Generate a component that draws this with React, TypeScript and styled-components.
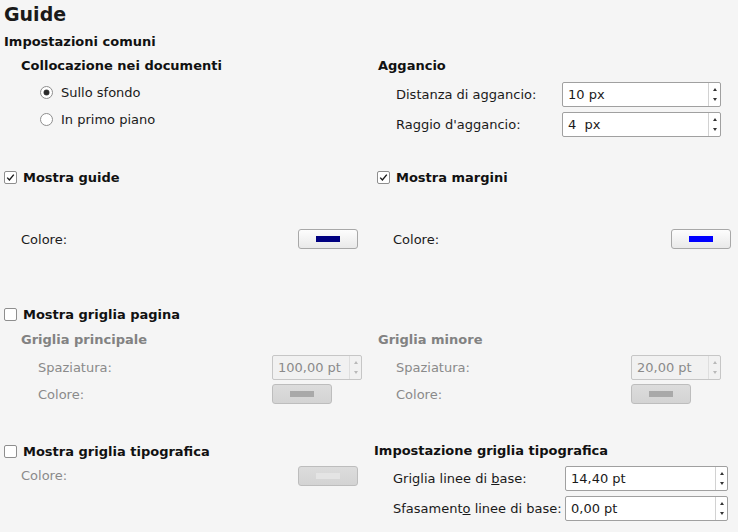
import React from 'react';
import styled, { createGlobalStyle } from 'styled-components';

const GlobalStyle = createGlobalStyle`
  html, body { margin: 0; padding: 0; background: #f5f5f5; }
  body {
    font-family: "DejaVu Sans", "Liberation Sans", sans-serif;
    font-size: 13px;
    color: #1a1a1a;
  }
`;

const Page = styled.div`
  width: 738px;
  height: 532px;
  box-sizing: border-box;
  padding-left: 4px;
  overflow: hidden;
  background: #f5f5f5;
`;

const Title = styled.h1`
  margin: 0;
  font-size: 19px;
  font-weight: bold;
  line-height: 28px;
  height: 28px;
`;

const Heading = styled.div<{ $indent?: number; $top?: number; $bottom?: number; $disabled?: boolean }>`
  font-weight: bold;
  line-height: 20px;
  height: 20px;
  white-space: nowrap;
  padding-left: ${(p) => p.$indent ?? 0}px;
  margin-top: ${(p) => p.$top ?? 0}px;
  margin-bottom: ${(p) => p.$bottom ?? 0}px;
  color: ${(p) => (p.$disabled ? '#828282' : '#111')};
`;

const TwoCol = styled.div<{ $top: number }>`
  display: grid;
  grid-template-columns: 369px 365px;
  align-items: start;
  margin-top: ${(p) => p.$top}px;
`;

const Column = styled.div`
  display: flex;
  flex-direction: column;
`;

const FieldRow = styled.div<{ $h: number; $indent: number; $right: number; $top?: number; $disabled?: boolean }>`
  display: flex;
  align-items: center;
  height: ${(p) => p.$h}px;
  padding-left: ${(p) => p.$indent}px;
  padding-right: ${(p) => p.$right}px;
  margin-top: ${(p) => p.$top ?? 0}px;
  color: ${(p) => (p.$disabled ? '#8a8a8a' : '#1a1a1a')};
`;

const Label = styled.span`
  flex: 1;
  white-space: nowrap;
`;

const Slot = styled.div<{ $w: number }>`
  width: ${(p) => p.$w}px;
  display: flex;
  justify-content: flex-start;
`;

const SpinBox = styled.div<{ $w: number; $disabled?: boolean }>`
  display: flex;
  width: ${(p) => p.$w}px;
  height: 25px;
  box-sizing: border-box;
  border: 1px solid ${(p) => (p.$disabled ? '#c6c6c6' : '#a0a0a0')};
  border-radius: 2px;
  background: ${(p) => (p.$disabled ? '#f1f1f1' : '#ffffff')};
  color: ${(p) => (p.$disabled ? '#8a8a8a' : '#1a1a1a')};
`;

const SpinValue = styled.span`
  flex: 1;
  padding-left: 5px;
  line-height: 23px;
  white-space: pre;
`;

const SpinButtons = styled.div<{ $disabled?: boolean }>`
  width: 12px;
  border-left: 1px solid ${(p) => (p.$disabled ? '#dedede' : '#d2d2d2')};
  display: flex;
  flex-direction: column;
  align-items: center;
  justify-content: space-between;
  padding: 5px 0 5px;
  box-sizing: border-box;
`;

const Arrow = styled.span<{ $down?: boolean; $disabled?: boolean }>`
  width: 0;
  height: 0;
  border-left: 2.5px solid transparent;
  border-right: 2.5px solid transparent;
  ${(p) =>
    p.$down
      ? `border-top: 3px solid ${p.$disabled ? '#b8b8b8' : '#333'};`
      : `border-bottom: 3px solid ${p.$disabled ? '#b8b8b8' : '#333'};`}
`;

const ColorButton = styled.div<{ $disabled?: boolean }>`
  width: 60px;
  height: 20px;
  box-sizing: border-box;
  border: 1px solid ${(p) => (p.$disabled ? '#bdbdbd' : '#a8a8a8')};
  border-radius: 3px;
  background: ${(p) =>
    p.$disabled ? 'linear-gradient(#dcdcdc, #d3d3d3)' : 'linear-gradient(#fdfdfd, #e9e9e9)'};
  display: flex;
  align-items: center;
  justify-content: center;
`;

const Swatch = styled.span<{ $color: string }>`
  width: 24px;
  height: 6px;
  background: ${(p) => p.$color};
`;

const CheckRow = styled.div<{ $indent?: number; $top?: number }>`
  display: flex;
  align-items: center;
  height: 20px;
  padding-left: ${(p) => p.$indent ?? 0}px;
  margin-top: ${(p) => p.$top ?? 0}px;
  font-weight: bold;
  color: #111;
  white-space: nowrap;
`;

const CheckBox = styled.span`
  width: 13px;
  height: 13px;
  box-sizing: border-box;
  border: 1px solid #8e8e8e;
  border-radius: 2px;
  background: #fff;
  display: inline-flex;
  align-items: center;
  justify-content: center;
  margin-right: 6px;
  flex-shrink: 0;
`;

const RadioRow = styled.div<{ $indent: number }>`
  display: flex;
  align-items: center;
  height: 27px;
  padding-left: ${(p) => p.$indent}px;
  white-space: nowrap;
`;

const Radio = styled.span`
  width: 13px;
  height: 13px;
  box-sizing: border-box;
  border: 1px solid #8e8e8e;
  border-radius: 50%;
  background: #fff;
  display: inline-flex;
  align-items: center;
  justify-content: center;
  margin-right: 8px;
  flex-shrink: 0;
`;

const RadioDot = styled.span`
  width: 5px;
  height: 5px;
  border-radius: 50%;
  background: #2a2a2a;
  box-shadow: 0 0 0 0.5px #555;
`;

const Check: React.FC<{ checked?: boolean }> = ({ checked }) => (
  <CheckBox>
    {checked && (
      <svg width="11" height="11" viewBox="0 0 11 11">
        <path d="M2.2 5.6 L4.4 8 L8.8 2.6" fill="none" stroke="#1a1a1a" strokeWidth="1.4" />
      </svg>
    )}
  </CheckBox>
);

const Spin: React.FC<{ value: string; w: number; disabled?: boolean }> = ({ value, w, disabled }) => (
  <SpinBox $w={w} $disabled={disabled}>
    <SpinValue>{value}</SpinValue>
    <SpinButtons $disabled={disabled}>
      <Arrow $disabled={disabled} />
      <Arrow $down $disabled={disabled} />
    </SpinButtons>
  </SpinBox>
);

const Color: React.FC<{ color: string; disabled?: boolean }> = ({ color, disabled }) => (
  <ColorButton $disabled={disabled}>
    <Swatch $color={color} />
  </ColorButton>
);

export default function App() {
  return (
    <Page>
      <GlobalStyle />
      <Title>Guide</Title>
      <Heading $top={4}>Impostazioni comuni</Heading>

      <TwoCol $top={4}>
        <Column>
          <Heading $indent={17} $bottom={3}>Collocazione nei documenti</Heading>
          <RadioRow $indent={36}>
            <Radio><RadioDot /></Radio>
            Sullo sfondo
          </RadioRow>
          <RadioRow $indent={36}>
            <Radio />
            In primo piano
          </RadioRow>
        </Column>
        <Column>
          <Heading $indent={5} $bottom={3}>Aggancio</Heading>
          <FieldRow $h={30} $indent={23} $right={17}>
            <Label>Distanza di aggancio:</Label>
            <Spin value="10 px" w={159} />
          </FieldRow>
          <FieldRow $h={30} $indent={23} $right={17}>
            <Label>Raggio d'aggancio:</Label>
            <Spin value="4  px" w={159} />
          </FieldRow>
        </Column>
      </TwoCol>

      <TwoCol $top={28}>
        <Column>
          <CheckRow>
            <Check checked />
            Mostra guide
          </CheckRow>
          <FieldRow $h={26} $indent={17} $right={15} $top={39}>
            <Label>Colore:</Label>
            <Color color="#000080" />
          </FieldRow>
        </Column>
        <Column>
          <CheckRow $indent={4}>
            <Check checked />
            Mostra margini
          </CheckRow>
          <FieldRow $h={26} $indent={20} $right={7} $top={39}>
            <Label>Colore:</Label>
            <Color color="#0000ff" />
          </FieldRow>
        </Column>
      </TwoCol>

      <CheckRow $top={52}>
        <Check />
        Mostra griglia pagina
      </CheckRow>

      <TwoCol $top={6}>
        <Column>
          <Heading $indent={17} $bottom={2} $disabled>Griglia principale</Heading>
          <FieldRow $h={30} $indent={34} $right={11} $disabled>
            <Label>Spaziatura:</Label>
            <Spin value="100,00 pt" w={90} disabled />
          </FieldRow>
          <FieldRow $h={24} $indent={34} $right={11} $disabled>
            <Label>Colore:</Label>
            <Slot $w={90}>
              <Color color="#a9a9a9" disabled />
            </Slot>
          </FieldRow>
        </Column>
        <Column>
          <Heading $indent={5} $bottom={2} $disabled>Griglia minore</Heading>
          <FieldRow $h={30} $indent={23} $right={17} $disabled>
            <Label>Spaziatura:</Label>
            <Spin value="20,00 pt" w={90} disabled />
          </FieldRow>
          <FieldRow $h={24} $indent={23} $right={17} $disabled>
            <Label>Colore:</Label>
            <Slot $w={90}>
              <Color color="#a9a9a9" disabled />
            </Slot>
          </FieldRow>
        </Column>
      </TwoCol>

      <TwoCol $top={35}>
        <Column>
          <CheckRow>
            <Check />
            Mostra griglia tipografica
          </CheckRow>
          <FieldRow $h={25} $indent={17} $right={15} $top={2} $disabled>
            <Label>Colore:</Label>
            <Color color="#e4e4e4" disabled />
          </FieldRow>
        </Column>
        <Column>
          <Heading $indent={1} $bottom={2}>Impostazione griglia tipografica</Heading>
          <FieldRow $h={30} $indent={20} $right={10}>
            <Label>
              Griglia linee di <u>b</u>ase:
            </Label>
            <Spin value="14,40 pt" w={163} />
          </FieldRow>
          <FieldRow $h={30} $indent={20} $right={10}>
            <Label>
              Sfasament<u>o</u> linee di base:
            </Label>
            <Spin value="0,00 pt" w={163} />
          </FieldRow>
        </Column>
      </TwoCol>
    </Page>
  );
}
